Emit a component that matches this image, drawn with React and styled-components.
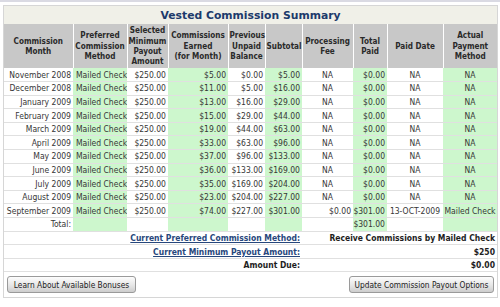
import React from "react";
import styled, { createGlobalStyle } from "styled-components";

const GlobalStyle = createGlobalStyle`
  body {
    margin: 0;
    background: #ffffff;
    font-family: "DejaVu Sans Condensed", "DejaVu Sans", sans-serif;
    font-stretch: condensed;
  }
`;

const Page = styled.div`
  width: 500px;
  height: 307px;
  overflow: hidden;
`;

const TopStrip = styled.div`
  height: 2px;
  background: #dadae3;
  margin-bottom: 3px;
`;

const Panel = styled.div`
  margin-left: 3px;
  width: 493px;
  border: 1px solid #d6d6d6;
  background: #ffffff;
`;

const Title = styled.div`
  height: 18px;
  line-height: 19px;
  background: #f0f0e8;
  text-align: center;
  font-family: "DejaVu Sans", sans-serif;
  font-stretch: normal;
  font-weight: bold;
  font-size: 10.8px;
  color: #1c3a6b;
`;

const Table = styled.table`
  width: 493px;
  table-layout: fixed;
  border-collapse: collapse;
  font-size: 8.5px;
  color: #363636;
`;

const HeadCell = styled.th`
  height: 44px;
  padding: 0 1px;
  background: #c8c8c8;
  border-left: 1px solid #ffffff;
  font-size: 8.1px;
  line-height: 10.4px;
  font-weight: bold;
  color: #2a2a2a;
  text-align: center;
  vertical-align: middle;
  &:first-child {
    border-left: none;
  }
`;

const Row = styled.tr`
  height: 13.6px;
  border-bottom: 1px solid #e0e0e0;
`;

const Cell = styled.td`
  padding: 0;
  padding-left: ${({ $align }) => ($align === "left" ? "3px" : "0")};
  padding-right: ${({ $align }) => ($align === "right" ? "2px" : "0")};
  background: ${({ $green }) => ($green ? "#cdf7cd" : "#ffffff")};
  text-align: ${({ $align }) => $align || "center"};
  font-weight: ${({ $bold }) => ($bold ? "bold" : "normal")};
  color: ${({ $bold }) => ($bold ? "#1e1e1e" : "inherit")};
  white-space: nowrap;
  overflow: hidden;
  line-height: 12px;
`;

const LinkText = styled.a`
  color: #27477c;
  font-weight: bold;
  text-decoration: underline;
`;

const Footer = styled.div`
  display: flex;
  justify-content: space-between;
  align-items: center;
  padding: 4px 3px;
`;

const Button = styled.button`
  height: 17px;
  width: ${({ $w }) => $w}px;
  padding: 0;
  border: 1px solid #9a9a9a;
  border-radius: 3px;
  background: linear-gradient(#fdfdfd, #e6e6e6 55%, #cdcdcd);
  font-family: "DejaVu Sans Condensed", "DejaVu Sans", sans-serif;
  font-stretch: condensed;
  font-size: 8.3px;
  color: #222222;
`;

const columns = [
  { w: 69, label: ["Commission", "Month"] },
  { w: 54, label: ["Preferred", "Commission", "Method"] },
  { w: 41, label: ["Selected", "Minimum", "Payout", "Amount"] },
  { w: 60, label: ["Commissions", "Earned", "(for Month)"] },
  { w: 37, label: ["Previous", "Unpaid", "Balance"] },
  { w: 37, label: ["Subtotal"] },
  { w: 51, label: ["Processing", "Fee"] },
  { w: 34, label: ["Total", "Paid"] },
  { w: 56, label: ["Paid Date"] },
  { w: 54, label: ["Actual", "Payment", "Method"] },
];

const green = [false, true, false, true, false, true, false, true, false, true];

const rows = [
  ["November 2008", "$5.00", "$0.00", "$5.00"],
  ["December 2008", "$11.00", "$5.00", "$16.00"],
  ["January 2009", "$13.00", "$16.00", "$29.00"],
  ["February 2009", "$15.00", "$29.00", "$44.00"],
  ["March 2009", "$19.00", "$44.00", "$63.00"],
  ["April 2009", "$33.00", "$63.00", "$96.00"],
  ["May 2009", "$37.00", "$96.00", "$133.00"],
  ["June 2009", "$36.00", "$133.00", "$169.00"],
  ["July 2009", "$35.00", "$169.00", "$204.00"],
  ["August 2009", "$23.00", "$204.00", "$227.00"],
  ["September 2009", "$74.00", "$227.00", "$301.00", "$0.00", "$301.00", "13-OCT-2009", "Mailed Check"],
];

const summary = [
  { label: "Current Preferred Commission Method:", value: "Receive Commissions by Mailed Check", link: true },
  { label: "Current Minimum Payout Amount:", value: "$250", link: true },
  { label: "Amount Due:", value: "$0.00" },
];

export default function App() {
  return (
    <Page>
      <GlobalStyle />
      <TopStrip />
      <Panel>
        <Title>Vested Commission Summary</Title>
        <Table>
          <colgroup>
            {columns.map((c, i) => (
              <col key={i} style={{ width: c.w }} />
            ))}
          </colgroup>
          <thead>
            <tr>
              {columns.map((c, i) => (
                <HeadCell key={i}>
                  {c.label.map((l, j) => (
                    <React.Fragment key={j}>
                      {j > 0 && <br />}
                      {l}
                    </React.Fragment>
                  ))}
                </HeadCell>
              ))}
            </tr>
          </thead>
          <tbody>
            {rows.map((r) => {
              const paid = r.length > 4;
              return (
                <Row key={r[0]}>
                  <Cell $align="right">{r[0]}</Cell>
                  <Cell $green $align="left">Mailed Check</Cell>
                  <Cell $align="right">$250.00</Cell>
                  <Cell $green $align="right">{r[1]}</Cell>
                  <Cell $align="right">{r[2]}</Cell>
                  <Cell $green $align="right">{r[3]}</Cell>
                  <Cell $align={paid ? "right" : undefined}>{paid ? r[4] : "NA"}</Cell>
                  <Cell $green $align="right">{paid ? r[5] : "$0.00"}</Cell>
                  <Cell>{paid ? r[6] : "NA"}</Cell>
                  <Cell $green>{paid ? r[7] : "NA"}</Cell>
                </Row>
              );
            })}
            <Row>
              <Cell $align="right">Total:</Cell>
              {green.slice(1).map((g, i) => (
                <Cell key={i} $green={g} $align="right">
                  {i === 6 ? "$301.00" : ""}
                </Cell>
              ))}
            </Row>
            {summary.map((s) => (
              <Row key={s.label}>
                <Cell colSpan={6} $align="right" $bold>
                  {s.link ? <LinkText>{s.label}</LinkText> : s.label}
                </Cell>
                <Cell colSpan={4} $align="right" $bold>
                  {s.value}
                </Cell>
              </Row>
            ))}
          </tbody>
        </Table>
        <Footer>
          <Button $w={129}>Learn About Available Bonuses</Button>
          <Button $w={145}>Update Commission Payout Options</Button>
        </Footer>
      </Panel>
    </Page>
  );
}
